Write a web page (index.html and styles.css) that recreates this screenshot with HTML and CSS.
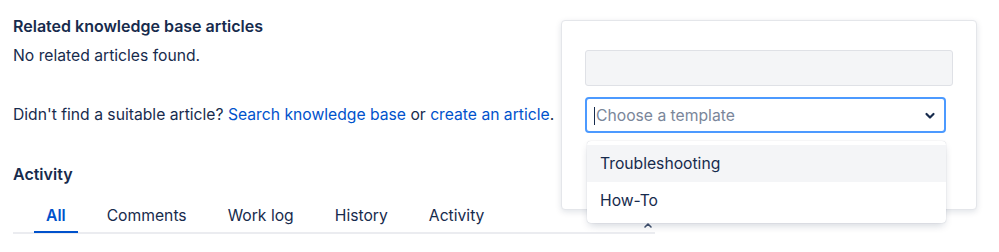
FILE: index.html
```html
<!DOCTYPE html>
<html lang="en">
<head>
    <meta charset="UTF-8">
    <title>Related knowledge base articles</title>
    <link rel="stylesheet" href="styles.css">
</head>
<body>
    <div class="content">
        <h2 class="section-title">Related knowledge base articles</h2>
        <p class="empty">No related articles found.</p>
        <p class="suggest">Didn't find a suitable article? <a href="#">Search knowledge base</a> or <a href="#">create an article</a>.</p>

        <h2 class="section-title activity-title">Activity</h2>
        <div class="tabs">
            <span class="tab active">All</span>
            <span class="tab">Comments</span>
            <span class="tab">Work log</span>
            <span class="tab">History</span>
            <span class="tab">Activity</span>
            <span class="sort-icon">
                <svg viewBox="0 0 10 8" width="10" height="8" fill="none" stroke="#42526e" stroke-width="1.6" stroke-linecap="round" stroke-linejoin="round">
                    <path d="M2 6l3-3 3 3"></path>
                </svg>
            </span>
        </div>
    </div>

    <div class="popup">
        <div class="field-disabled"></div>
        <div class="select">
            <span class="caret"></span>
            <span class="placeholder">Choose a template</span>
            <svg class="chevron" viewBox="0 0 12 8" width="12" height="8" fill="none" stroke="#172b4d" stroke-width="2.2" stroke-linecap="round" stroke-linejoin="round">
                <path d="M2.5 2l3.5 3.5L9.5 2"></path>
            </svg>
        </div>
    </div>

    <div class="menu">
        <div class="menu-item focused">Troubleshooting</div>
        <div class="menu-item">How-To</div>
    </div>
</body>
</html>
```

FILE: styles.css
```css
* {
    margin: 0;
    padding: 0;
    box-sizing: border-box;
    font-family: Inter, "Noto Sans", sans-serif;
}

body {
    background: white;
    color: #172b4d;
    font-size: 15.7px;
    line-height: 20px;
}

a {
    color: #0052cc;
    text-decoration: none;
}

.content {
    width: 655px;
    padding: 16px 0 0 13px;
}

.section-title {
    font-size: 16px;
    font-weight: 600;
    line-height: 20px;
}

.empty {
    margin-top: 10px;
}

.suggest {
    margin-top: 39px;
}

.activity-title {
    margin-top: 39px;
}

.tabs {
    display: flex;
    align-items: flex-end;
    margin-top: 16px;
    border-bottom: 2px solid #ebecf0;
    padding-left: 21px;
    gap: 17px;
    position: relative;
}

.tab {
    padding: 6px 12px 5px;
    border-bottom: 2px solid transparent;
    margin-bottom: -1px;
}

.tab.active {
    color: #0052cc;
    font-weight: 600;
    border-bottom-color: #0052cc;
}

.sort-icon {
    position: absolute;
    left: 630px;
    bottom: 3px;
    display: flex;
}

.popup {
    position: absolute;
    left: 561px;
    top: 20px;
    width: 416px;
    height: 190px;
    background: white;
    border: 1px solid #e4e6ea;
    border-radius: 4px;
    box-shadow: 0 2px 6px rgba(9, 30, 66, 0.12);
    padding: 29px 0 0 23px;
}

.field-disabled {
    width: 368px;
    height: 36px;
    background: #f4f5f7;
    border: 1px solid #dfe1e6;
    border-radius: 3px;
}

.select {
    width: 361px;
    height: 36px;
    margin-top: 11px;
    border: 2px solid #4c9aff;
    border-radius: 4px;
    display: flex;
    align-items: center;
    padding: 1px 8px 0 7px;
}

.caret {
    width: 1px;
    height: 18px;
    background: #172b4d;
    margin-right: 1px;
}

.placeholder {
    flex: 1;
    color: #7a869a;
}

.menu {
    position: absolute;
    left: 587px;
    top: 141px;
    width: 359px;
    background: white;
    border-radius: 4px;
    box-shadow: 0 4px 8px -2px rgba(9, 30, 66, 0.2), 0 0 1px rgba(9, 30, 66, 0.25);
    padding: 4px 0;
}

.menu-item {
    height: 37px;
    line-height: 37px;
    padding-left: 13px;
}

.menu-item.focused {
    background: #f4f5f7;
}
```
